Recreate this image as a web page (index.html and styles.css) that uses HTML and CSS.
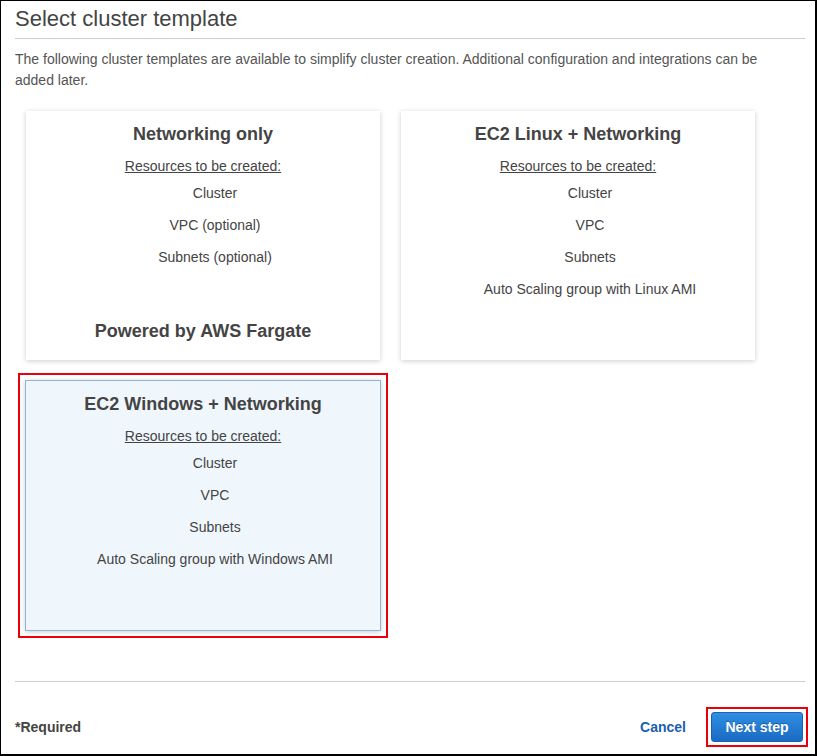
FILE: index.html
```html
<!DOCTYPE html>
<html>
<head>
<meta charset="utf-8">
<link rel="stylesheet" href="styles.css">
</head>
<body>
<div class="page">
  <h1 class="title">Select cluster template</h1>
  <p class="intro">The following cluster templates are available to simplify cluster creation. Additional configuration and integrations can be added later.</p>
  <div class="grid">
    <div class="card">
      <div class="card-title">Networking only</div>
      <div class="res">Resources to be created:</div>
      <ul class="items">
        <li>Cluster</li>
        <li>VPC (optional)</li>
        <li>Subnets (optional)</li>
      </ul>
      <div class="powered">Powered by AWS Fargate</div>
    </div>
    <div class="card">
      <div class="card-title">EC2 Linux + Networking</div>
      <div class="res">Resources to be created:</div>
      <ul class="items">
        <li>Cluster</li>
        <li>VPC</li>
        <li>Subnets</li>
        <li>Auto Scaling group with Linux AMI</li>
      </ul>
    </div>
    <div class="card selected">
      <div class="card-title">EC2 Windows + Networking</div>
      <div class="res">Resources to be created:</div>
      <ul class="items">
        <li>Cluster</li>
        <li>VPC</li>
        <li>Subnets</li>
        <li>Auto Scaling group with Windows AMI</li>
      </ul>
    </div>
  </div>
  <div class="footer">
    <span class="required">*Required</span>
    <div class="actions">
      <a class="cancel">Cancel</a>
      <span class="highlight"><button class="next">Next step</button></span>
    </div>
  </div>
</div>
</body>
</html>
```
FILE: styles.css
```css
html, body {
  margin: 0;
  padding: 0;
  background: #fff;
}
body {
  font-family: "Liberation Sans", Arial, sans-serif;
  color: #444;
}
.page {
  box-sizing: border-box;
  width: 817px;
  height: 756px;
  border-style: solid;
  border-color: #000;
  border-width: 1px 2px 2px 1px;
  padding: 0 10px 0 14px;
  display: flex;
  flex-direction: column;
}
.title {
  margin: 5px 0 0 0;
  font-size: 22px;
  font-weight: normal;
  line-height: 26px;
  color: #444;
  padding-bottom: 6px;
  border-bottom: 1px solid #ccc;
}
.intro {
  margin: 10px 0 0 0;
  max-width: 760px;
  font-size: 14px;
  line-height: 21px;
  color: #555;
}
.grid {
  margin: 20px 0 0 11px;
  display: grid;
  grid-template-columns: 354px 354px;
  column-gap: 21px;
  row-gap: 20px;
}
.card {
  box-sizing: border-box;
  height: 249px;
  background: #fff;
  box-shadow: 0 1px 5px rgba(0, 0, 0, 0.2);
  padding: 11px 10px 17px;
  display: flex;
  flex-direction: column;
  align-items: center;
  text-align: center;
}
.card.selected {
  margin-left: -1px;
  width: 356px;
  height: 251px;
  padding-top: 11px;
  background: #eff7fd;
  border: 1px solid #8db4de;
  outline: 2px solid #e8000b;
  outline-offset: 5px;
}
.card-title {
  font-size: 18px;
  font-weight: bold;
  line-height: 24px;
  color: #444;
}
.res {
  margin-top: 10px;
  font-size: 14px;
  line-height: 20px;
  text-decoration: underline;
  color: #444;
}
.items {
  list-style: none;
  margin: 7px 0 0 0;
  padding: 0 0 0 24px;
  display: flex;
  flex-direction: column;
  align-items: center;
  gap: 12px;
  font-size: 14px;
  line-height: 20px;
  color: #444;
}
.powered {
  margin-top: auto;
  font-size: 18px;
  font-weight: bold;
  line-height: 24px;
  color: #444;
}
.footer {
  margin-top: auto;
  border-top: 1px solid #ccc;
  padding: 25px 0 7px;
  display: flex;
  align-items: center;
  justify-content: space-between;
}
.required {
  font-size: 14px;
  font-weight: bold;
  color: #444;
}
.actions {
  display: flex;
  align-items: center;
  gap: 20px;
  margin-right: -3px;
}
.cancel {
  font-size: 14px;
  font-weight: bold;
  color: #1b5fae;
}
.highlight {
  display: flex;
  border: 2px solid #e8000b;
  padding: 3px;
}
.next {
  box-sizing: border-box;
  width: 92px;
  height: 30px;
  border: 1px solid #1b62b0;
  border-radius: 3px;
  background: linear-gradient(#2f8fe2, #1a6ac2);
  color: #fff;
  font-family: "Liberation Sans", Arial, sans-serif;
  font-size: 14px;
  font-weight: bold;
  text-shadow: 0 -1px 0 rgba(0, 0, 0, 0.3);
  padding: 0;
}
```
